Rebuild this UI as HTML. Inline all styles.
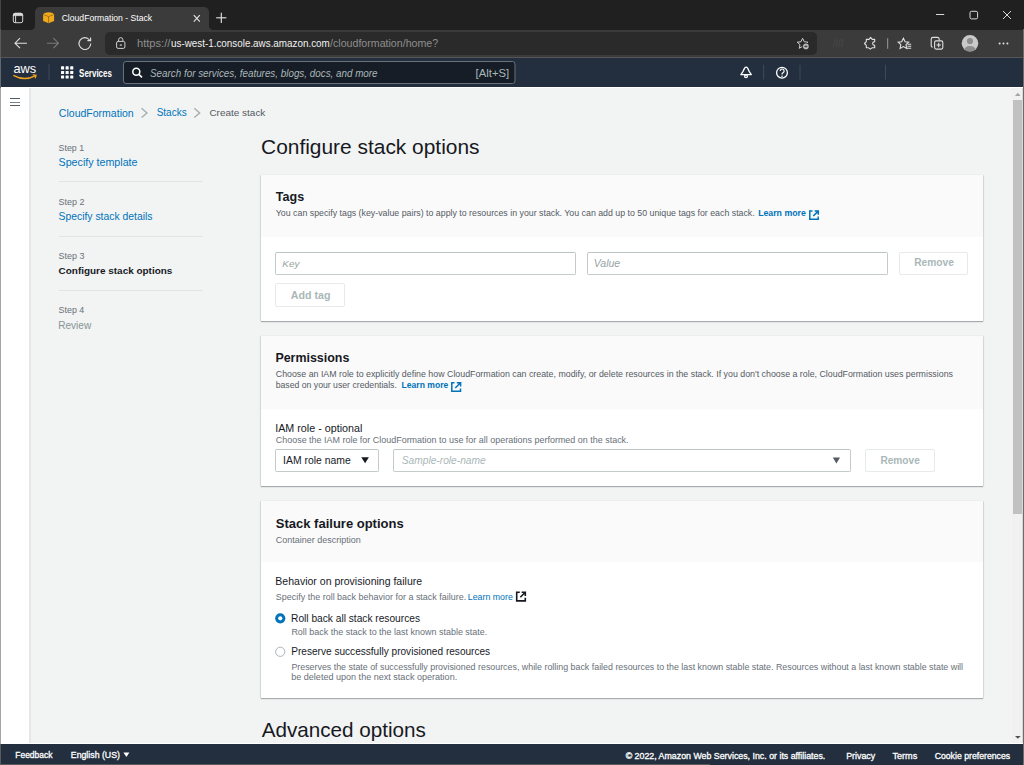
<!DOCTYPE html>
<html><head><meta charset="utf-8"><title>CloudFormation - Stack</title>
<style>
*{margin:0;padding:0;box-sizing:border-box}
html,body{width:1024px;height:765px;overflow:hidden;background:#f2f3f3;font-family:"Liberation Sans",sans-serif}
.a{position:absolute}
.t{position:absolute;white-space:nowrap;line-height:20px;font-family:"Liberation Sans",sans-serif}
svg{position:absolute;overflow:visible}
</style></head><body>
<!-- browser chrome -->
<div class="a" style="left:0;top:0;width:1024px;height:30px;background:#202020"></div>
<div class="a" style="left:0;top:30px;width:1024px;height:27px;background:#3b3b3b"></div>
<div class="a" style="left:0;top:57px;width:1024px;height:1px;background:#565656"></div>
<div class="a" style="left:35px;top:7px;width:174px;height:24px;background:#3b3b3b;border-radius:5px 5px 0 0"></div>
<div class="a" style="left:30px;top:25px;width:5px;height:5px;background:radial-gradient(circle at 0 0,#202020 5px,#3b3b3b 5.5px)"></div>
<div class="a" style="left:209px;top:25px;width:5px;height:5px;background:radial-gradient(circle at 100% 0,#202020 5px,#3b3b3b 5.5px)"></div>
<div class="a" style="left:105px;top:32px;width:712px;height:23px;background:#2a2a2a;border-radius:5px"></div>
<!-- tab strip icon -->
<svg style="left:0;top:0" width="1024" height="58">
  <g fill="none" stroke="#d6d6d6" stroke-width="1">
    <rect x="13.3" y="13.3" width="9.4" height="9.4" rx="1.8"/>
    <path d="M13.3 15.6 V15 A1.8 1.8 0 0 1 15.1 13.3 H20.9 A1.8 1.8 0 0 1 22.7 15 V15.6 Z" fill="#dcdcdc" stroke="#dcdcdc" stroke-width="0.8"/>
    <line x1="15.6" y1="15.2" x2="15.6" y2="22.7"/>
  </g>
  <!-- cube -->
  <g>
    <path d="M44.6 13.1 Q48.6 11.6 52.6 13.1 L54.1 14.6 V21.1 L48.6 23.2 L43.1 21.1 V14.6 Z" fill="#f0aa1e"/>
    <path d="M43.5 14.7 L48.6 16.5 L53.7 14.7" fill="none" stroke="#9c6a0e" stroke-width="0.8"/>
    <path d="M48.6 16.5 V23" stroke="#9c6a0e" stroke-width="0.9"/>
  </g>
  <!-- tab close -->
  <g stroke="#e6e6e6" stroke-width="1.1">
    <line x1="193.8" y1="15.1" x2="199.8" y2="21.6"/><line x1="199.8" y1="15.1" x2="193.8" y2="21.6"/>
  </g>
  <!-- new tab plus -->
  <g stroke="#e6e6e6" stroke-width="1.1">
    <line x1="216.2" y1="17.8" x2="226.4" y2="17.8"/><line x1="221.3" y1="12.7" x2="221.3" y2="22.9"/>
  </g>
  <!-- window controls -->
  <g stroke="#d9d9d9" stroke-width="1" fill="none">
    <line x1="936" y1="14.5" x2="944.2" y2="14.5"/>
    <rect x="970" y="11.3" width="7.6" height="7.6" rx="1.5"/>
    <line x1="1003" y1="11" x2="1011" y2="19"/><line x1="1011" y1="11" x2="1003" y2="19"/>
  </g>
  <!-- back / forward / refresh -->
  <g stroke="#e0e0e0" stroke-width="1.1" fill="none">
    <path d="M26.9 43.2 H15 M20 38.2 L15 43.2 L20 48.2"/>
  </g>
  <g stroke="#7a7a7a" stroke-width="1.1" fill="none">
    <path d="M46.9 43.2 H58.4 M53.4 38.2 L58.4 43.2 L53.4 48.2"/>
  </g>
  <g stroke="#e0e0e0" stroke-width="1.1" fill="none">
    <path d="M89.6 40 A5.9 5.9 0 1 0 90.8 43.6"/>
    <path d="M90.6 37.4 V40.6 H87.4" />
  </g>
  <!-- lock -->
  <g stroke="#cfcfcf" stroke-width="1" fill="none">
    <rect x="116.6" y="41.4" width="8.3" height="7" rx="1.5"/>
    <path d="M118.6 41.4 V39.8 A2.15 2.15 0 0 1 122.9 39.8 V41.4"/>
  </g>
  <rect x="119.8" y="44.4" width="2" height="1.3" fill="#cfcfcf"/>
  <!-- star add -->
  <g stroke="#cfcfcf" stroke-width="1" fill="none">
    <path d="M802.6 38.3 L804.3 41.8 L808 42.2 L805.2 44.7 L806 48.3 L802.6 46.4 L799.2 48.3 L800 44.7 L797.2 42.2 L800.9 41.8 Z"/>
  </g>
  <circle cx="805.9" cy="46.4" r="3.6" fill="#2a2a2a"/>
  <circle cx="805.9" cy="46.4" r="2.8" fill="#bdbdbd"/>
  <line x1="804.3" y1="46.4" x2="807.5" y2="46.4" stroke="#3a3a3a" stroke-width="0.9"/><line x1="805.9" y1="44.8" x2="805.9" y2="48" stroke="#3a3a3a" stroke-width="0.6"/>
  <!-- faded icon -->
  <g stroke="#464646" stroke-width="1" fill="none">
    <path d="M833.5 47.5 L835 40 H837.5 L836 47.5 M838.5 47.5 L840 40 H843 L841.5 47.5"/>
  </g>
  <!-- extensions puzzle -->
  <g stroke="#e0e0e0" stroke-width="1.1" fill="none" stroke-linejoin="round">
    <path d="M866.3 39.4 H869 L870.6 37.4 L872.2 39.4 H874.7 V41.6 Q872.6 41.9 872.6 43.5 Q872.6 45.1 874.7 45.4 V47.8 H872 L870.3 49.2 L868.6 47.8 H866.3 V45.3 L864.5 43.5 L866.3 41.7 Z"/>
  </g>
  <line x1="887.7" y1="38.2" x2="887.7" y2="48.8" stroke="#9a9a9a" stroke-width="1"/>
  <!-- favorites -->
  <g stroke="#e0e0e0" stroke-width="1.1" fill="none">
    <path d="M903.4 38.3 L905.1 41.8 L908.6 42.2 L906 44.7 L906.7 48.5 L903.4 46.6 L900.1 48.5 L900.8 44.7 L898.2 42.2 L901.7 41.8 Z"/>
    <path d="M907.5 44.2 H911.2 M907.5 46.2 H911.2 M906.8 48.2 H911.2"/>
  </g>
  <!-- collections -->
  <g stroke="#e0e0e0" stroke-width="1.1" fill="none">
    <rect x="934.6" y="40.9" width="8.2" height="8.2" rx="1.5"/>
    <path d="M932.6 47.2 A1.8 1.8 0 0 1 931.2 45.6 V39.2 A1.8 1.8 0 0 1 933 37.4 H937.4 A1.8 1.8 0 0 1 939.2 39 V40.6"/>
    <path d="M938.7 42.8 V47.2 M936.5 45 H940.9"/>
  </g>
  <!-- avatar -->
  <circle cx="970" cy="43.3" r="8.3" fill="#c9c9c9"/>
  <clipPath id="av"><circle cx="970" cy="43.3" r="8.3"/></clipPath>
  <g clip-path="url(#av)" fill="#8d8d8d">
    <circle cx="970" cy="41" r="3.1"/>
    <ellipse cx="970" cy="50.5" rx="6" ry="4.5"/>
  </g>
  <!-- more dots -->
  <g fill="#e0e0e0">
    <circle cx="999.6" cy="43.4" r="1"/><circle cx="1003.5" cy="43.4" r="1"/><circle cx="1007.4" cy="43.4" r="1"/>
  </g>
</svg>

<!-- AWS nav -->
<div class="a" style="left:0;top:58px;width:1024px;height:29px;background:#232f3e"></div>
<div class="a" style="left:0;top:87px;width:1024px;height:1px;background:#ffffff"></div>
<svg style="left:0;top:0" width="1024" height="90">
  <text x="13.4" y="72.6" font-family="Liberation Sans" font-size="13.6" fill="#ffffff" textLength="22.8" lengthAdjust="spacingAndGlyphs">aws</text>
  <path d="M13.9 75.6 Q24.5 81.4 35 75.8" fill="none" stroke="#f3a51d" stroke-width="1.4" stroke-linecap="round"/>
  <path d="M33.2 74.8 L36.1 75.2 L35.3 77.8" fill="none" stroke="#f3a51d" stroke-width="1.2" stroke-linecap="round"/>
  <line x1="49" y1="64" x2="49" y2="80" stroke="#3d4a5a" stroke-width="1"/>
  <g fill="#ffffff">
    <rect x="61" y="66.3" width="3.1" height="3.1" rx="0.5"/><rect x="65.6" y="66.3" width="3.1" height="3.1" rx="0.5"/><rect x="70.2" y="66.3" width="3.1" height="3.1" rx="0.5"/>
    <rect x="61" y="70.9" width="3.1" height="3.1" rx="0.5"/><rect x="65.6" y="70.9" width="3.1" height="3.1" rx="0.5"/><rect x="70.2" y="70.9" width="3.1" height="3.1" rx="0.5"/>
    <rect x="61" y="75.5" width="3.1" height="3.1" rx="0.5"/><rect x="65.6" y="75.5" width="3.1" height="3.1" rx="0.5"/><rect x="70.2" y="75.5" width="3.1" height="3.1" rx="0.5"/>
  </g>
  <rect x="123.5" y="61.5" width="391.5" height="22" rx="2.5" fill="#161d26" stroke="#687078" stroke-width="1"/>
  <g stroke="#ffffff" stroke-width="1.5" fill="none">
    <circle cx="136.3" cy="71.8" r="3.5"/><line x1="138.9" y1="74.4" x2="142" y2="77.4"/>
  </g>
  <!-- bell -->
  <g stroke="#ffffff" stroke-width="1.3" fill="none" stroke-linejoin="round">
    <path d="M740.9 74.6 H751.3 L749.3 71.6 L747.6 68.1 Q746.1 66.3 744.6 68.1 L742.9 71.6 Z"/>
    <circle cx="746" cy="76.2" r="1.4"/>
  </g>
  <line x1="763.6" y1="64.7" x2="763.6" y2="79.6" stroke="#3d4a5a" stroke-width="1"/>
  <circle cx="782" cy="72.7" r="5.4" fill="none" stroke="#ffffff" stroke-width="1.3"/>
  <path d="M780.2 70.9 A1.95 1.95 0 1 1 783.2 72.6 Q782 73.3 782 74.6" fill="none" stroke="#ffffff" stroke-width="1.2"/><circle cx="782" cy="76.3" r="0.8" fill="#ffffff"/>
  <line x1="800" y1="64.7" x2="800" y2="79.6" stroke="#3d4a5a" stroke-width="1"/>
  <line x1="885.5" y1="64.7" x2="885.5" y2="79.6" stroke="#3d4a5a" stroke-width="1"/>
</svg>

<!-- side nav strip -->
<div class="a" style="left:0;top:88px;width:29px;height:655px;background:#ffffff"></div>
<div class="a" style="left:29px;top:88px;width:2px;height:655px;background:#e5e8e8"></div>
<div class="a" style="left:10px;top:97.9px;width:10px;height:1.2px;background:#545b64"></div>
<div class="a" style="left:10px;top:101.5px;width:10px;height:1.2px;background:#7a8189"></div>
<div class="a" style="left:10px;top:105.1px;width:10px;height:1.2px;background:#545b64"></div>

<!-- breadcrumbs chevrons -->
<svg style="left:0;top:0" width="300" height="130">
  <path d="M141.6 108.3 L147 112.9 L141.6 117.6" fill="none" stroke="#a2adae" stroke-width="1.3"/>
  <path d="M194.3 108.3 L199.7 112.9 L194.3 117.6" fill="none" stroke="#a2adae" stroke-width="1.3"/>
</svg>

<!-- left nav dividers -->
<div class="a" style="left:58.6px;top:181px;width:144.5px;height:1px;background:#e1e4e4"></div>
<div class="a" style="left:58.6px;top:236px;width:144.5px;height:1px;background:#e1e4e4"></div>
<div class="a" style="left:58.6px;top:290px;width:144.5px;height:1px;background:#e1e4e4"></div>

<!-- containers -->
<div class="a" style="left:260.5px;top:175px;width:722.5px;height:146px;background:#fff;box-shadow:0 1px 1px 0 rgba(0,28,36,.3),1px 0 1px 0 rgba(0,28,36,.08),-1px 0 1px 0 rgba(0,28,36,.08);border-top:1px solid #eaeded"></div>
<div class="a" style="left:260.5px;top:175px;width:722.5px;height:62px;background:#fafafa"></div>

<div class="a" style="left:260.5px;top:336px;width:722.5px;height:150px;background:#fff;box-shadow:0 1px 1px 0 rgba(0,28,36,.3),1px 0 1px 0 rgba(0,28,36,.08),-1px 0 1px 0 rgba(0,28,36,.08);border-top:1px solid #eaeded"></div>
<div class="a" style="left:260.5px;top:336px;width:722.5px;height:73px;background:#fafafa"></div>

<div class="a" style="left:260.5px;top:501px;width:722.5px;height:197px;background:#fff;box-shadow:0 1px 1px 0 rgba(0,28,36,.3),1px 0 1px 0 rgba(0,28,36,.08),-1px 0 1px 0 rgba(0,28,36,.08);border-top:1px solid #eaeded"></div>
<div class="a" style="left:260.5px;top:501px;width:722.5px;height:61px;background:#fafafa"></div>

<!-- tags inputs -->
<div class="a" style="left:275px;top:252px;width:301px;height:23px;border:1px solid #c3cbcc;border-top-color:#bcc5c6;border-radius:2px;background:#fff"></div>
<div class="a" style="left:587px;top:252px;width:301px;height:23px;border:1px solid #c3cbcc;border-top-color:#bcc5c6;border-radius:2px;background:#fff"></div>
<div class="a" style="left:899px;top:252px;width:69px;height:23px;border:1px solid #e6eaea;border-radius:2px;background:#fff"></div>
<div class="a" style="left:275px;top:283px;width:70px;height:24px;border:1px solid #e6eaea;border-radius:2px;background:#fff"></div>

<!-- permissions inputs -->
<div class="a" style="left:275px;top:449px;width:104px;height:23px;border:1px solid #c3cbcc;border-top-color:#bcc5c6;border-radius:2px;background:#fff"></div>
<div class="a" style="left:393px;top:449px;width:458px;height:23px;border:1px solid #c3cbcc;border-top-color:#bcc5c6;border-radius:2px;background:#fff"></div>
<div class="a" style="left:865px;top:449px;width:70px;height:23px;border:1px solid #e6eaea;border-radius:2px;background:#fff"></div>

<svg style="left:0;top:0" width="1024" height="765">
  <path d="M361.3 457.2 H368.9 L365.1 463.2 Z" fill="#16191f"/>
  <path d="M832.8 457.6 H840 L836.4 463.5 Z" fill="#545b64"/>
  <!-- external link icons (blue) -->
  <g fill="none" stroke="#0073bb" stroke-width="1.5">
    <path d="M812.5 211 H809.8 V219.3 H818.2 V216.5"/>
    <path d="M813.3 216 L818.2 211.1 M814.6 211 H818.3 V214.7"/>
    <path d="M454.5 382.7 H451.8 V391.3 H460.5 V388.5"/>
    <path d="M455.3 388 L460.5 382.8 M456.8 382.7 H460.6 V386.5"/>
  </g>
  <g fill="none" stroke="#16191f" stroke-width="1.6">
    <path d="M519.8 592.3 H516.7 V600.9 H525.3 V597.8"/>
    <path d="M520.3 597.3 L525.3 592.3 M521.6 592.3 H525.3 V596"/>
  </g>
  <!-- radios -->
  <circle cx="280.25" cy="618.3" r="5.1" fill="#0073bb"/><circle cx="280.25" cy="618.3" r="2.1" fill="#fff"/>
  <circle cx="280.25" cy="651.8" r="4.6" fill="#fff" stroke="#aab7b8" stroke-width="1"/>
</svg>

<!-- footer -->
<div class="a" style="left:0;top:743px;width:1024px;height:1px;background:#ffffff"></div>
<div class="a" style="left:0;top:744px;width:1024px;height:21px;background:#232f3e"></div>
<svg style="left:0;top:0" width="200" height="765"><path d="M123.4 752.5 H129.4 L126.4 756.9 Z" fill="#ffffff"/></svg>

<!-- scrollbar -->
<div class="a" style="left:1012px;top:88px;width:11px;height:655px;background:#f1f1f1"></div>
<div class="a" style="left:1013px;top:100px;width:9px;height:414px;background:#c1c1c1"></div><div class="a" style="left:1022px;top:88px;width:1px;height:655px;background:#d8d8d8"></div>
<svg style="left:0;top:0" width="1024" height="765">
  <path d="M1015 96 H1020.6 L1017.8 92.8 Z" fill="#a3a3a3"/>
  <path d="M1015 735.9 H1020.7 L1017.85 738.8 Z" fill="#505050"/>
</svg>
<!-- window border -->
<div class="a" style="left:0;top:0;width:1px;height:29px;background:#444444"></div><div class="a" style="left:0;top:29px;width:1px;height:29px;background:#5a5a5a"></div><div class="a" style="left:0;top:58px;width:1px;height:30px;background:#63676d"></div><div class="a" style="left:0;top:88px;width:1px;height:656px;background:#a4a4a4"></div><div class="a" style="left:0;top:744px;width:1px;height:21px;background:#5a5a5a"></div>
<div class="a" style="left:1023px;top:29px;width:1px;height:736px;background:#6c6c6c"></div>
<div class="a" style="left:0;top:764px;width:710px;height:1px;background:#5a5a5a"></div>

<div class="t" style="left:61.67px;top:8.25px;font-size:8.627px;color:#ffffff;">CloudFormation - Stack</div>
<div class="t" style="left:136.68px;top:33.85px;font-size:10.300px;color:#8e8e8e;transform:scaleX(1.0817);transform-origin:0.72px 0;">https://</div>
<div class="t" style="left:170.53px;top:33.85px;font-size:10.300px;color:#f2f2f2;transform:scaleX(0.9563);transform-origin:0.67px 0;">us-west-1.console.aws.amazon.com</div>
<div class="t" style="left:329.90px;top:33.85px;font-size:10.300px;color:#8e8e8e;transform:scaleX(1.0327);transform-origin:0.00px 0;">/cloudformation/home?</div>
<div class="t" style="left:79.00px;top:63.55px;font-size:10.000px;color:#ffffff;font-weight:bold;transform:scaleX(0.7985);transform-origin:0.30px 0;">Services</div>
<div class="t" style="left:149.87px;top:62.85px;font-size:11.000px;color:#aab7b8;font-style:italic;transform:scaleX(0.8947);transform-origin:0.33px 0;">Search for services, features, blogs, docs, and more</div>
<div class="t" style="left:475.61px;top:62.85px;font-size:11.287px;color:#aab7b8;">[Alt+S]</div>
<div class="t" style="left:58.87px;top:102.65px;font-size:10.521px;color:#0073bb;">CloudFormation</div>
<div class="t" style="left:156.65px;top:103.15px;font-size:10.000px;color:#0073bb;">Stacks</div>
<div class="t" style="left:209.40px;top:103.15px;font-size:9.973px;color:#545b64;">Create stack</div>
<div class="t" style="left:58.60px;top:137.65px;font-size:8.821px;color:#687078;">Step 1</div>
<div class="t" style="left:58.52px;top:151.95px;font-size:10.691px;color:#0073bb;">Specify template</div>
<div class="t" style="left:58.60px;top:191.95px;font-size:8.945px;color:#687078;">Step 2</div>
<div class="t" style="left:58.53px;top:207.15px;font-size:10.390px;color:#0073bb;">Specify stack details</div>
<div class="t" style="left:58.60px;top:245.85px;font-size:8.913px;color:#687078;">Step 3</div>
<div class="t" style="left:58.60px;top:260.95px;font-size:9.943px;color:#16191f;font-weight:bold;">Configure stack options</div>
<div class="t" style="left:58.60px;top:300.25px;font-size:8.865px;color:#687078;">Step 4</div>
<div class="t" style="left:58.19px;top:315.70px;font-size:10.094px;color:#879596;">Review</div>
<div class="t" style="left:261.05px;top:136.55px;font-size:20.917px;color:#16191f;">Configure stack options</div>
<div class="t" style="left:275.87px;top:187.45px;font-size:12.534px;color:#16191f;font-weight:bold;">Tags</div>
<div class="t" style="left:275.82px;top:203.45px;font-size:8.803px;color:#545b64;">You can specify tags (key-value pairs) to apply to resources in your stack. You can add up to 50 unique tags for each stack.</div>
<div class="t" style="left:758.13px;top:203.45px;font-size:8.766px;color:#0073bb;font-weight:bold;">Learn more</div>
<div class="t" style="left:282.30px;top:253.75px;font-size:9.914px;color:#97a3a4;font-style:italic;">Key</div>
<div class="t" style="left:593.70px;top:253.25px;font-size:10.542px;color:#97a3a4;font-style:italic;">Value</div>
<div class="t" style="left:914.14px;top:253.35px;font-size:10.224px;color:#aab7b8;font-weight:bold;">Remove</div>
<div class="t" style="left:290.83px;top:284.55px;font-size:10.634px;color:#aab7b8;font-weight:bold;">Add tag</div>
<div class="t" style="left:275.39px;top:348.45px;font-size:12.449px;color:#16191f;font-weight:bold;">Permissions</div>
<div class="t" style="left:275.76px;top:364.45px;font-size:8.839px;color:#545b64;">Choose an IAM role to explicitly define how CloudFormation can create, modify, or delete resources in the stack. If you don&#x27;t choose a role, CloudFormation uses permissions</div>
<div class="t" style="left:275.63px;top:374.75px;font-size:8.696px;color:#545b64;">based on your user credentials.</div>
<div class="t" style="left:401.54px;top:374.75px;font-size:8.598px;color:#0073bb;font-weight:bold;">Learn more</div>
<div class="t" style="left:275.23px;top:417.75px;font-size:10.741px;color:#16191f;">IAM role - optional</div>
<div class="t" style="left:275.75px;top:430.35px;font-size:8.961px;color:#687078;">Choose the IAM role for CloudFormation to use for all operations performed on the stack.</div>
<div class="t" style="left:283.06px;top:450.55px;font-size:10.424px;color:#16191f;">IAM role name</div>
<div class="t" style="left:401.69px;top:450.65px;font-size:10.221px;color:#aab7b8;font-style:italic;">Sample-role-name</div>
<div class="t" style="left:880.44px;top:450.55px;font-size:10.119px;color:#aab7b8;font-weight:bold;">Remove</div>
<div class="t" style="left:275.81px;top:513.95px;font-size:13.006px;color:#16191f;font-weight:bold;">Stack failure options</div>
<div class="t" style="left:275.75px;top:530.45px;font-size:8.994px;color:#687078;">Container description</div>
<div class="t" style="left:275.36px;top:570.55px;font-size:10.535px;color:#16191f;">Behavior on provisioning failure</div>
<div class="t" style="left:275.80px;top:587.45px;font-size:8.972px;color:#687078;">Specify the roll back behavior for a stack failure.</div>
<div class="t" style="left:467.80px;top:587.45px;font-size:8.809px;color:#0073bb;">Learn more</div>
<div class="t" style="left:291.09px;top:609.25px;font-size:10.187px;color:#16191f;">Roll back all stack resources</div>
<div class="t" style="left:291.38px;top:622.45px;font-size:8.983px;color:#687078;">Roll back the stack to the last known stable state.</div>
<div class="t" style="left:291.29px;top:642.35px;font-size:10.094px;color:#16191f;">Preserve successfully provisioned resources</div>
<div class="t" style="left:291.39px;top:656.55px;font-size:8.869px;color:#687078;">Preserves the state of successfully provisioned resources, while rolling back failed resources to the last known stable state. Resources without a last known stable state will</div>
<div class="t" style="left:291.21px;top:667.45px;font-size:9.052px;color:#687078;">be deleted upon the next stack operation.</div>
<div class="t" style="left:261.65px;top:719.65px;font-size:20.676px;color:#16191f;">Advanced options</div>
<div class="t" style="left:15.32px;top:745.45px;font-size:8.445px;color:#ffffff;-webkit-text-stroke:0.3px #ffffff;">Feedback</div>
<div class="t" style="left:70.80px;top:745.45px;font-size:8.757px;color:#ffffff;-webkit-text-stroke:0.3px #ffffff;">English (US)</div>
<div class="t" style="left:625.67px;top:745.75px;font-size:8.820px;color:#ffffff;-webkit-text-stroke:0.3px #ffffff;">© 2022, Amazon Web Services, Inc. or its affiliates.</div>
<div class="t" style="left:846.19px;top:745.75px;font-size:8.875px;color:#ffffff;-webkit-text-stroke:0.3px #ffffff;">Privacy</div>
<div class="t" style="left:892.42px;top:745.75px;font-size:9.118px;color:#ffffff;-webkit-text-stroke:0.3px #ffffff;">Terms</div>
<div class="t" style="left:934.66px;top:745.75px;font-size:8.713px;color:#ffffff;-webkit-text-stroke:0.3px #ffffff;">Cookie preferences</div>
</body></html>
